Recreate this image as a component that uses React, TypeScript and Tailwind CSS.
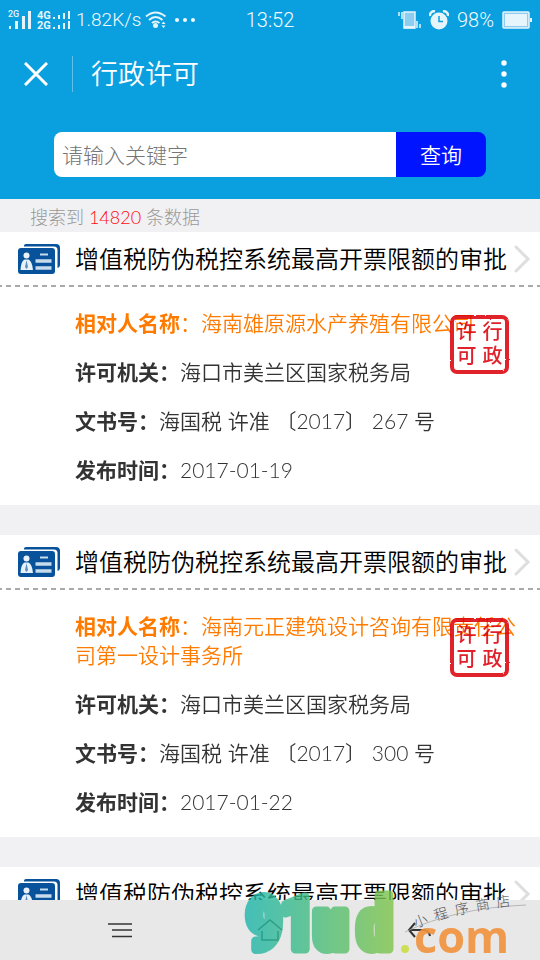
const licenses = [
  {
    title: "增值税防伪税控系统最高开票限额的审批",
    company: "海南雄原源水产养殖有限公司",
    agency: "海口市美兰区国家税务局",
    docNo: "海国税 许准 〔2017〕 267 号",
    date: "2017-01-19",
  },
  {
    title: "增值税防伪税控系统最高开票限额的审批",
    company: "海南元正建筑设计咨询有限责任公司第一设计事务所",
    agency: "海口市美兰区国家税务局",
    docNo: "海国税 许准 〔2017〕 300 号",
    date: "2017-01-22",
  },
  {
    title: "增值税防伪税控系统最高开票限额的审批",
  },
]

function SignalIcon() {
  return (
    <svg width="64" height="22" viewBox="0 0 64 22" fill="#e6f5fc" aria-hidden="true" className="shrink-0">
      <text x="0" y="8" fontSize="9" fontWeight="500" fontFamily="Roboto, sans-serif">2G</text>
      <rect x="1" y="17" width="2" height="3" />
      <rect x="7" y="12" width="3" height="8" />
      <rect x="14" y="7" width="3" height="13" />
      <rect x="20" y="2" width="3" height="18" />
      <text x="29" y="10" fontSize="11" fontWeight="700" fontFamily="Roboto, sans-serif">4G</text>
      <text x="29" y="20" fontSize="11" fontWeight="700" fontFamily="Roboto, sans-serif">2G</text>
      <rect x="45" y="8" width="2" height="2" />
      <rect x="50" y="6" width="2" height="4" />
      <rect x="55" y="4" width="2" height="6" />
      <rect x="60" y="2" width="2" height="8" />
      <rect x="45" y="18" width="2" height="2" />
      <rect x="50" y="16" width="2" height="4" />
      <rect x="55" y="14" width="2" height="6" />
      <rect x="60" y="12" width="2" height="8" />
    </svg>
  )
}

function WifiIcon() {
  return (
    <svg width="22" height="18" viewBox="0 0 22 18" fill="none" stroke="#e6f5fc" strokeWidth="2" aria-hidden="true" className="shrink-0">
      <path d="M1 5.500Q10.500-2.500 20.500 5.500M4 9Q10.500 3 17.500 9M7 12Q10.500 9 14.500 12" />
      <circle cx="10.500" cy="14.500" r="2.500" fill="#e6f5fc" stroke="none" />
      <path d="M16.500 13l2-2.500 2 2.500zM16.500 14.500l2 2.500 2-2.500z" fill="#e6f5fc" stroke="none" />
    </svg>
  )
}

function VibrateIcon() {
  return (
    <svg width="23" height="20" viewBox="0 0 23 20" aria-hidden="true" className="shrink-0">
      <rect x="6" y="2" width="11" height="16" fill="#8ccdf0" stroke="#e6f5fc" strokeWidth="1.500" />
      <path d="M6 16h11v2.500H6z" fill="#e6f5fc" />
      <path d="M1 2v4M4 2v7M19 11v7M22 14v4" stroke="#e6f5fc" strokeWidth="1.500" />
    </svg>
  )
}

function AlarmIcon() {
  return (
    <svg width="20" height="20" viewBox="0 0 20 20" fill="#e6f5fc" aria-hidden="true" className="shrink-0">
      <circle cx="10" cy="11" r="8.500" />
      <path d="M1 6A4 4 0 0 1 6 1.500M14 1.500A4 4 0 0 1 19 6" fill="none" stroke="#e6f5fc" strokeWidth="2.500" />
      <path d="M10 6v5.500h4" fill="none" stroke="#0a9fdf" strokeWidth="1.500" />
    </svg>
  )
}

function BatteryIcon() {
  return (
    <svg width="30" height="18" viewBox="0 0 30 18" aria-hidden="true" className="shrink-0">
      <rect x="1" y="1" width="26" height="16" rx="1" fill="#8ccdf0" stroke="#e6f5fc" strokeWidth="1.500" />
      <rect x="3" y="3" width="22" height="12" fill="#e6f5fc" />
      <rect x="28" y="7" width="2" height="4" fill="#e6f5fc" />
    </svg>
  )
}

function StatusBar() {
  return (
    <div className="grid h-9 grid-cols-[1fr_auto_1fr] items-center px-2 pt-1 font-['Roboto','Noto_Sans_CJK_SC',sans-serif] text-xl font-[350] text-[#f3fafd]">
      <div className="flex items-center gap-1">
        <SignalIcon />
        <span className="text-[19px]">1.82K/s</span>
        <WifiIcon />
        <svg width="20" height="4" viewBox="0 0 20 4" fill="#f3fafd" aria-hidden="true" className="ml-1">
          <circle cx="2" cy="2" r="2" />
          <circle cx="10" cy="2" r="2" />
          <circle cx="18" cy="2" r="2" />
        </svg>
      </div>
      <span>13:52</span>
      <div className="flex items-center justify-end gap-2">
        <VibrateIcon />
        <AlarmIcon />
        <span>98%</span>
        <BatteryIcon />
      </div>
    </div>
  )
}

function TitleBar() {
  return (
    <div className="flex h-[76px] items-center px-6">
      <button type="button" aria-label="关闭" className="shrink-0">
        <svg width="24" height="24" viewBox="0 0 24 24" stroke="white" strokeWidth="3">
          <path d="M1 1l22 22M23 1L1 23" />
        </svg>
      </button>
      <div className="ml-6 h-9 w-px bg-white/35" />
      <h1 className="ml-[18px] flex-1 text-[27px] font-[350] text-white">行政许可</h1>
      <button type="button" aria-label="更多" className="flex w-6 justify-center">
        <svg width="6" height="28" viewBox="0 0 6 28" fill="white">
          <circle cx="3" cy="3" r="2.700" />
          <circle cx="3" cy="14" r="2.700" />
          <circle cx="3" cy="25" r="2.700" />
        </svg>
      </button>
    </div>
  )
}

function SearchForm() {
  return (
    <form className="mx-[54px] mt-5 flex h-[45px] overflow-hidden rounded-lg" onSubmit={(e) => e.preventDefault()}>
      <input
        type="text"
        aria-label="关键字"
        placeholder="请输入关键字"
        className="min-w-0 flex-1 bg-white px-2 text-[21px] font-light text-[#333] outline-none placeholder:text-[#757575]"
      />
      <button type="submit" className="w-[90px] bg-[#0014ff] text-[21px] font-[350] text-white">
        查询
      </button>
    </form>
  )
}

function CardIcon() {
  return (
    <svg width="44" height="32" viewBox="0 0 44 32" aria-hidden="true" className="shrink-0">
      <path d="M7 2.500Q7 1 9 1H39Q43 1 43 5V22Q43 24.500 40.500 25V7Q40.500 3.500 37 3.500H7z" fill="#07529a" />
      <rect x="1" y="5" width="37" height="26" rx="3" fill="#07529a" />
      <circle cx="9.500" cy="12.500" r="3" fill="#e8f1f8" />
      <path d="M3.500 27Q4 18 7.500 16.500H11.500Q15 18 16 27z" fill="#e8f1f8" />
      <path d="M9.500 17l1.500 7-1.500 2-1.500-2z" fill="#5b8fc0" />
      <path d="M23 11.500h8" stroke="#c7dced" strokeWidth="2" />
      <path d="M18.500 18h16M18.500 25h16" stroke="#c7dced" strokeWidth="3.500" />
    </svg>
  )
}

function Seal() {
  return (
    <div className="absolute top-[27px] right-[30px] grid size-[61px] place-items-center mix-blend-multiply">
      <svg viewBox="0 0 61 61" fill="none" stroke="#e0202a" className="absolute inset-0" aria-hidden="true">
        <filter id="rough">
          <feTurbulence type="fractalNoise" baseFrequency="0.250" numOctaves="2" seed="4" />
          <feDisplacementMap in="SourceGraphic" scale="2" />
        </filter>
        <rect x="3" y="3" width="55" height="55" rx="5" strokeWidth="4" filter="url(#rough)" />
      </svg>
      <div className="grid grid-cols-2 gap-x-[6px] pb-1 text-center text-xl leading-6 font-medium text-[#e0202a]">
        <span>许</span>
        <span>行</span>
        <span>可</span>
        <span>政</span>
      </div>
    </div>
  )
}

function LicenseCard({ item }: { item: (typeof licenses)[number] }) {
  const rows = [
    { label: "许可机关：", value: item.agency },
    { label: "文书号：", value: item.docNo },
    { label: "发布时间：", value: item.date },
  ]

  return (
    <article className="bg-white">
      <a href="#detail" className="flex h-[53px] items-center pr-[9px] pl-[17px]">
        <CardIcon />
        <h2 className="ml-[14px] flex-1 truncate text-2xl font-[350] text-black">{item.title}</h2>
        <svg width="17" height="28" viewBox="0 0 17 28" fill="none" stroke="#dedede" strokeWidth="3" strokeLinecap="round" aria-hidden="true" className="shrink-0">
          <path d="M2 2l12 12L2 26" />
        </svg>
      </a>
      <div className="h-[2px] bg-[repeating-linear-gradient(90deg,#aaa_0_2px,transparent_2px_6px,#aaa_6px_9px)]" />
      {item.company && (
        <div className="relative isolate flex flex-col gap-5 pt-[21px] pr-5 pb-[21px] pl-[75px] text-[21px] leading-[29px] font-[350] text-[#333]">
          <p className="text-[#ff7b00]">
            <b className="font-bold">相对人名称</b>：{item.company}
          </p>
          {rows.map((row) => (
            <p key={row.label}>
              <b className="font-bold">{row.label}</b>
              {row.value}
            </p>
          ))}
          <Seal />
        </div>
      )}
    </article>
  )
}

// site logo laid over the bottom right corner
function Watermark() {
  return (
    <svg width="300" height="72" viewBox="0 0 300 72" className="pointer-events-none absolute right-0 bottom-0" aria-label="91ud.com 小程序商店">
      <defs>
        <linearGradient id="brand" gradientUnits="userSpaceOnUse" x1="0" y1="0" x2="155" y2="0">
          <stop offset="0" stopColor="#19b5b0" />
          <stop offset="0.450" stopColor="#43bd82" />
          <stop offset="1" stopColor="#80c447" />
        </linearGradient>
        <path id="slogan" d="M176 40Q215 23 295 15" />
      </defs>
      <g
        fill="url(#brand)"
        stroke="url(#brand)"
        strokeWidth="9"
        strokeLinejoin="round"
        opacity="0.800"
        fontFamily="'Roboto Condensed', 'Open Sans Condensed', 'DejaVu Sans Condensed', sans-serif"
        fontWeight="700"
        fontSize="72"
      >
        <text x="6" y="61">9</text>
        <text x="40" y="61">1</text>
        <text x="73" y="61">u</text>
        <text x="117" y="61">d</text>
      </g>
      <circle cx="165" cy="61" r="4" fill="#cfdf55" />
      <text x="174" y="65" fill="#f0923c" opacity="0.900" fontFamily="'Open Sans', sans-serif" fontWeight="700" fontSize="45">
        com
      </text>
      <path d="M165 44Q215 20 286 17" fill="none" stroke="#aaa" strokeWidth="0.800" />
      <text fill="#555" fontFamily="'Noto Sans CJK SC', sans-serif" fontWeight="300" fontSize="14">
        <textPath href="#slogan">{"小\u2002程\u2002序\u2002商\u2002店"}</textPath>
      </text>
    </svg>
  )
}

function NavBar() {
  return (
    <nav className="relative grid h-[60px] shrink-0 grid-cols-[1fr_60px_1fr] items-center bg-[#e8e8e8]">
      <button type="button" aria-label="菜单" className="justify-self-center">
        <svg width="26" height="18" viewBox="0 0 26 18" stroke="#333" strokeWidth="1.500">
          <path d="M1 3h24M5 9h20M5 15.500h20" />
        </svg>
      </button>
      <button type="button" aria-label="主页" className="justify-self-center">
        <svg width="26" height="22" viewBox="0 0 26 22" fill="none" stroke="#333" strokeWidth="1.500">
          <path d="M1 11L13 1l12 10M5 12v9h16v-9" />
        </svg>
      </button>
      <button type="button" aria-label="返回" className="justify-self-center">
        <svg width="26" height="18" viewBox="0 0 26 18" fill="none" stroke="#333" strokeWidth="2">
          <path d="M8 2L2 9l6 7M2 9h14q6 0 7 6" />
        </svg>
      </button>
      <Watermark />
    </nav>
  )
}

export default function App() {
  return (
    <div className="flex h-screen flex-col overflow-hidden bg-[#f1f1f3] font-['Lato','Noto_Sans_CJK_SC',sans-serif]">
      <header className="h-[199px] shrink-0 bg-[#0a9fdf]">
        <StatusBar />
        <TitleBar />
        <SearchForm />
      </header>
      <main className="min-h-0 flex-1 overflow-hidden">
        <p className="px-[30px] pt-1 text-lg leading-[29px] font-light text-[#999]">
          搜索到 <span className="text-[#ff0d0d]">14820</span> 条数据
        </p>
        <div className="flex flex-col gap-[30px]">
          {licenses.map((item, idx) => (
            <LicenseCard key={idx} item={item} />
          ))}
        </div>
      </main>
      <NavBar />
    </div>
  )
}
